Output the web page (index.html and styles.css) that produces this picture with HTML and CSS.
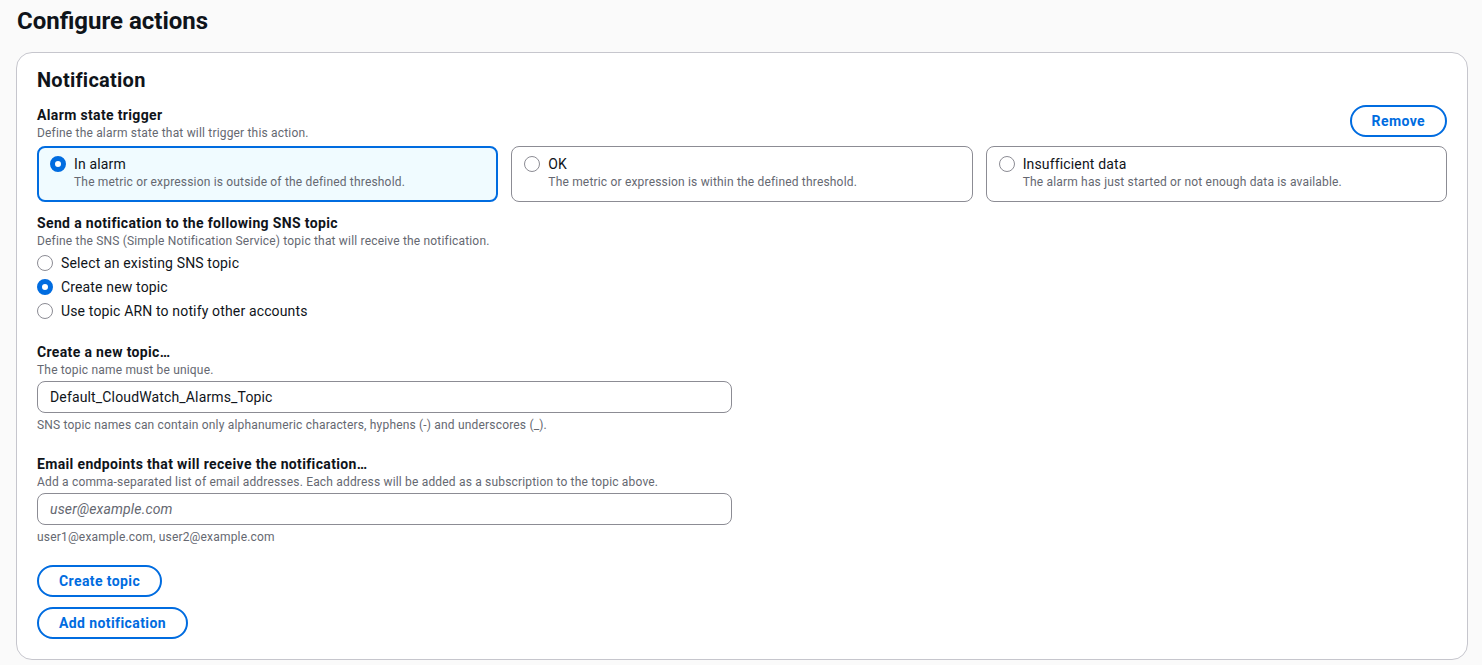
FILE: index.html
```html
<!DOCTYPE html>
<html lang="en">
<head>
<meta charset="utf-8">
<title>Configure actions</title>
<link rel="stylesheet" href="styles.css">
</head>
<body>
<div class="page">
  <h1 class="page-title">Configure actions</h1>
  <section class="container">
    <h2 class="container-title">Notification</h2>

    <div class="field-head-row">
      <div class="field-head">
        <div class="label">Alarm state trigger</div>
        <div class="desc">Define the alarm state that will trigger this action.</div>
      </div>
      <button class="btn">Remove</button>
    </div>

    <div class="tiles">
      <div class="tile selected">
        <span class="radio on"></span>
        <div class="tile-text">
          <div class="tile-label">In alarm</div>
          <div class="tile-desc">The metric or expression is outside of the defined threshold.</div>
        </div>
      </div>
      <div class="tile">
        <span class="radio"></span>
        <div class="tile-text">
          <div class="tile-label">OK</div>
          <div class="tile-desc">The metric or expression is within the defined threshold.</div>
        </div>
      </div>
      <div class="tile">
        <span class="radio"></span>
        <div class="tile-text">
          <div class="tile-label">Insufficient data</div>
          <div class="tile-desc">The alarm has just started or not enough data is available.</div>
        </div>
      </div>
    </div>

    <div class="field sns">
      <div class="label">Send a notification to the following SNS topic</div>
      <div class="desc">Define the SNS (Simple Notification Service) topic that will receive the notification.</div>
      <div class="radio-group">
        <div class="radio-row"><span class="radio"></span><span>Select an existing SNS topic</span></div>
        <div class="radio-row"><span class="radio on"></span><span>Create new topic</span></div>
        <div class="radio-row"><span class="radio"></span><span>Use topic ARN to notify other accounts</span></div>
      </div>
    </div>

    <div class="field topic">
      <div class="label">Create a new topic…</div>
      <div class="desc">The topic name must be unique.</div>
      <div class="input">Default_CloudWatch_Alarms_Topic</div>
      <div class="hint">SNS topic names can contain only alphanumeric characters, hyphens (-) and underscores (_).</div>
    </div>

    <div class="field email">
      <div class="label">Email endpoints that will receive the notification…</div>
      <div class="desc">Add a comma-separated list of email addresses. Each address will be added as a subscription to the topic above.</div>
      <div class="input placeholder">user@example.com</div>
      <div class="hint">user1@example.com, user2@example.com</div>
    </div>

    <div class="actions">
      <button class="btn">Create topic</button>
      <button class="btn">Add notification</button>
    </div>
  </section>
</div>
</body>
</html>
```

FILE: styles.css
```css
* { box-sizing: border-box; }

html, body {
  margin: 0;
  padding: 0;
  background: #fafafa;
}

body {
  font-family: Roboto, "Liberation Sans", Arial, sans-serif;
  color: #0f141a;
  font-size: 14px;
  line-height: 20px;
  letter-spacing: 0.15px;
}

.page {
  padding: 6px 14px 0 16px;
}

.page-title {
  margin: 0 0 0 1px;
  font-size: 24px;
  line-height: 30px;
  font-weight: 700;
  letter-spacing: 0;
  color: #0f141a;
}

.container {
  margin-top: 16px;
  background: #ffffff;
  border: 1px solid #c6c6cd;
  border-radius: 16px;
  padding: 15px 20px 20px 20px;
  display: flex;
  flex-direction: column;
}

.container-title {
  margin: 0;
  font-size: 20px;
  line-height: 24px;
  font-weight: 700;
  letter-spacing: 0.25px;
}

.field-head-row {
  margin-top: 13px;
  display: flex;
  justify-content: space-between;
  align-items: flex-start;
}

.label {
  font-size: 14px;
  line-height: 20px;
  font-weight: 700;
  letter-spacing: 0.35px;
}

.desc, .hint {
  font-size: 12px;
  line-height: 16px;
  color: #656871;
  letter-spacing: 0.18px;
}

.btn {
  font-family: inherit;
  font-size: 14px;
  line-height: 20px;
  font-weight: 700;
  letter-spacing: 0.4px;
  color: #006ce0;
  background: #ffffff;
  border: 2px solid #006ce0;
  border-radius: 20px;
  padding: 4px 20px;
  cursor: pointer;
}

.tiles {
  margin-top: 5px;
  display: grid;
  grid-template-columns: 1fr 1fr 1fr;
  gap: 13px;
}

.tile {
  display: flex;
  gap: 8px;
  align-items: flex-start;
  border: 1px solid #8c8c94;
  border-radius: 8px;
  padding: 7px 12px 11px 12px;
  min-height: 56px;
}

.tile.selected {
  border: 2px solid #006ce0;
  background: #f0fbff;
  padding: 6px 11px 10px 11px;
}

.tile .radio {
  margin-top: 2px;
}

.tile-label {
  font-size: 14px;
  line-height: 20px;
}

.tile-desc {
  font-size: 12px;
  line-height: 16px;
  color: #656871;
  letter-spacing: 0.18px;
}

.radio {
  flex: none;
  display: inline-block;
  width: 16px;
  height: 16px;
  border-radius: 50%;
  border: 1.5px solid #8c8c94;
  background: #ffffff;
}

.radio.on {
  border: 5px solid #006ce0;
}

.field.sns {
  margin-top: 11px;
}

.radio-group {
  margin-top: 2px;
  display: flex;
  flex-direction: column;
}

.radio-row {
  display: flex;
  align-items: center;
  gap: 8px;
  height: 24px;
}

.field.topic {
  margin-top: 19px;
}

.field.email {
  margin-top: 21px;
}

.input {
  margin-top: 3px;
  width: 695px;
  height: 32px;
  border: 1px solid #8c8c94;
  border-radius: 8px;
  padding: 5px 12px;
  font-size: 14px;
  line-height: 20px;
  color: #0f141a;
}

.input.placeholder {
  color: #656871;
  font-style: italic;
}

.hint {
  margin-top: 4px;
}

.actions {
  margin-top: 20px;
  display: flex;
  flex-direction: column;
  align-items: flex-start;
  gap: 10px;
}
```
